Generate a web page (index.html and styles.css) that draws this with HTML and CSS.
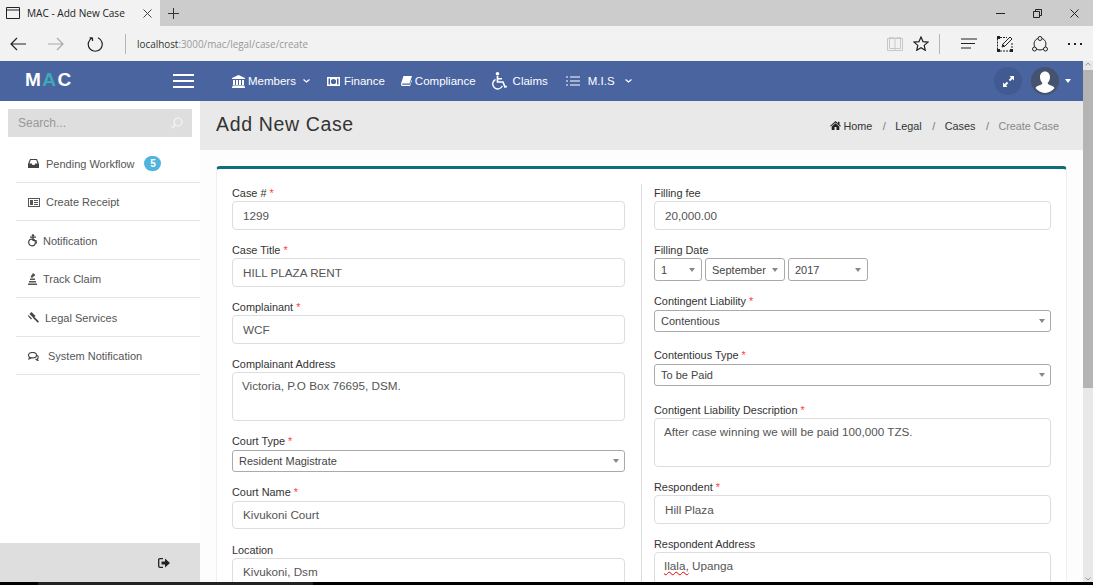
FILE: index.html
```html
<!DOCTYPE html>
<html>
<head>
    <title>MAC - Add New Case</title>
    <link rel="stylesheet" href="styles.css">
</head>
<body>
    <div class="tabstrip">
        <div class="tab">
            <svg class="tab-icon" width="14" height="12" viewBox="0 0 14 12"><path d="M.5.5h13v11H.5zM.5 3h13" fill="none" stroke="#222"/></svg>
            <span class="tab-title">MAC - Add New Case</span>
            <svg class="tab-close" width="9" height="9" viewBox="0 0 9 9"><path d="M.5.5l8 8M8.5.5l-8 8" stroke="#444"/></svg>
        </div>
        <svg class="tab-new" width="11" height="11" viewBox="0 0 11 11"><path d="M5.5 0v11M0 5.5h11" stroke="#333"/></svg>
        <div class="window-controls">
            <svg width="9" height="9" viewBox="0 0 9 9"><path d="M0 4.5h9" stroke="#222"/></svg>
            <svg width="9" height="9" viewBox="0 0 9 9"><path d="M.5 2.5h6v6h-6zM2.5 2.5v-2h6v6h-2" fill="none" stroke="#222"/></svg>
            <svg width="9" height="9" viewBox="0 0 9 9"><path d="M.5.5l8 8M8.5.5l-8 8" stroke="#222"/></svg>
        </div>
    </div>

    <div class="addressbar">
        <svg class="tool-back" width="16" height="14" viewBox="0 0 16 14"><path d="M16 7H1M7 1L1 7l6 6" fill="none" stroke="#222" stroke-width="1.2"/></svg>
        <svg class="tool-forward" width="16" height="14" viewBox="0 0 16 14"><path d="M0 7h15M9 1l6 6-6 6" fill="none" stroke="#aaa" stroke-width="1.2"/></svg>
        <svg class="tool-refresh" width="16" height="16" viewBox="0 0 16 16"><path d="M5.5 1.8A7 7 0 1 0 11 1.8M5.5 1.8V5M5.5 1.8H2.6" fill="none" stroke="#222" stroke-width="1.2"/></svg>
        <span class="tool-divider"></span>
        <span class="url"><b>localhost</b>:3000/mac/legal/case/create</span>
        <svg class="tool-read" width="16" height="14" viewBox="0 0 16 14"><path d="M.5 1.500h15v12H.5zM8 1.500v12M2.500 1.500V.5C5 .5 7 .5 8 1.500c1-1 3-1 5.500-1v1M2.500 1.500v10H8M13.500 1.500v10H8" fill="none" stroke="#c8c8c8"/></svg>
        <svg class="tool-star" width="16" height="15" viewBox="0 0 16 15"><path d="M8 1l2 4.600 5 .5-3.800 3.300 1.100 4.900L8 11.800l-4.300 2.500 1.100-4.900L1 6.100l5-.5z" fill="none" stroke="#222" stroke-width="1.200"/></svg>
        <span class="tool-divider tool-divider-right"></span>
        <svg class="tool-hub" width="17" height="11" viewBox="0 0 17 11"><path d="M0 1h16M0 5.500h14M0 10h10" stroke="#222" stroke-width="1.100"/></svg>
        <svg class="tool-note" width="16" height="16" viewBox="0 0 16 16"><path d="M.5 2.500v11M15 7v6.500M3 15h10M3 1.500h7" fill="none" stroke="#222" stroke-dasharray="2 1"/><path d="M0 0h3v3H0zM0 13h3v3H0zM13 13h3v3h-3z" fill="#222"/><path d="M5 11l1-3 7-7 2 2-7 7zM5.500 8.500l2 2" fill="none" stroke="#222"/></svg>
        <svg class="tool-share" width="16" height="16" viewBox="0 0 16 16"><g fill="none" stroke="#222"><circle cx="8" cy="8" r="6"/><circle cx="8" cy="2.500" r="2" fill="#f2f2f2"/><circle cx="2.500" cy="13" r="2" fill="#f2f2f2"/><circle cx="13.500" cy="13" r="2" fill="#f2f2f2"/></g></svg>
        <span class="tool-more">
            <i></i><i></i><i></i>
        </span>
    </div>

    <div class="page">
        <div class="viewport">
            <nav class="topnav">
                <div class="logo">M<span class="logo-a">A</span>C</div>
                <div class="hamburger"><i></i><i></i><i></i></div>
                <ul class="menu">
                    <li class="menu-members">
                        <svg width="13" height="13" viewBox="0 0 13 13" fill="#fff"><path d="M6.500 0L13 3v1H0V3zM1 5h2v5H1zM4 5h2v5H4zM7 5h2v5H7zM10 5h2v5h-2zM.5 10.500h12V12H.5zM0 12h13v1H0z"/></svg>
                        Members
                        <svg class="chev" width="7" height="4" viewBox="0 0 7 4"><path d="M.5.500l3 2.500 3-2.500" fill="none" stroke="#fff" stroke-width="1.200"/></svg>
                    </li>
                    <li class="menu-finance">
                        <svg width="13" height="9" viewBox="0 0 13 9"><path d="M0 0h13v9H0z" fill="#fff"/><circle cx="6.500" cy="4.500" r="2.600" fill="#4a64a0"/><path d="M1.500 1.500h1.500v6H1.500zM10 1.500h1.500v6H10z" fill="#4a64a0"/></svg>
                        Finance
                    </li>
                    <li class="menu-compliance">
                        <svg width="11" height="10" viewBox="0 0 11 10"><path d="M2.500 0H11L8.500 7.500H1.500C1 7.500 1 8.800 1.500 8.800H9L10.500 4 11 4.500 9 10H1.500C.2 10-.3 8.500.2 7z" fill="#fff"/></svg>
                        Compliance
                    </li>
                    <li class="menu-claims">
                        <svg width="15" height="18" viewBox="0 0 15 18"><circle cx="5.500" cy="1.800" r="1.800" fill="#fff"/><path d="M5.500 4v6h5.500l2 5 1.800-.7" fill="none" stroke="#fff" stroke-width="1.700"/><path d="M5.500 6.800h4.500M3.500 7.500a5 5 0 1 0 6.800 6.500" fill="none" stroke="#fff" stroke-width="1.400"/></svg>
                        Claims
                    </li>
                    <li class="menu-mis">
                        <svg width="14" height="10" viewBox="0 0 14 10"><path d="M0 1h2M0 5h2M0 9h2M4 1h10M4 5h10M4 9h10" stroke="#fff" stroke-width="1.200"/></svg>
                        M.I.S
                        <svg class="chev" width="7" height="4" viewBox="0 0 7 4"><path d="M.5.500l3 2.500 3-2.500" fill="none" stroke="#fff" stroke-width="1.200"/></svg>
                    </li>
                </ul>
                <div class="nav-right">
                    <span class="expand">
                        <svg width="11" height="11" viewBox="0 0 10 10"><path d="M6 0h4v4L8.500 2.800 6.500 4.800 5.200 3.500l2-2zM4 10H0V6l1.500 1.200 2-2L4.800 6.500l-2 2z" fill="#fff"/></svg>
                    </span>
                    <span class="avatar">
                        <svg width="28" height="28" viewBox="0 0 28 28"><path d="M14 4.500c3 0 5 2.400 5 5.600 0 2.500-1 4.700-2.400 6 .3 1.300 1.400 1.800 3.500 2.500 1.700.6 2.900 1.300 3.400 2.400A13 13 0 0 1 14 26a13 13 0 0 1-9.500-5c.5-1.100 1.700-1.800 3.400-2.400 2.100-.7 3.200-1.200 3.500-2.500-1.400-1.300-2.400-3.500-2.400-6 0-3.200 2-5.600 5-5.600z" fill="#fff"/></svg>
                    </span>
                    <span class="caret"></span>
                </div>
            </nav>

            <div class="layout">
                <aside class="sidebar">
                    <div class="search">
                        <span>Search...</span>
                        <svg width="12" height="12" viewBox="0 0 12 12"><circle cx="7" cy="5" r="4" fill="none" stroke="#f5f5f5" stroke-width="1.200"/><path d="M4 8l-3 3" stroke="#f5f5f5" stroke-width="1.400"/></svg>
                    </div>
                    <ul class="side-menu">
                        <li>
                            <svg class="side-icon" width="11" height="9" viewBox="0 0 11 9"><path d="M2 0h7l2 5v4H0V5zM2.800 1L1.500 4.500h2.300l.7 1.500h2l.7-1.500h2.300L8.200 1z" fill="#444" fill-rule="evenodd"/></svg>
                            <span class="side-text">Pending Workflow</span>
                            <span class="badge">5</span>
                        </li>
                        <li>
                            <svg class="side-icon icon-receipt" width="12" height="9" viewBox="0 0 12 9"><path d="M0 0h12v9H0zM1 1v7h10V1zM2 2h3v5H2zM6 2h4v1H6zM6 4h4v1H6zM6 6h4v1H6z" fill="#555" fill-rule="evenodd"/></svg>
                            <span class="side-text">Create Receipt</span>
                        </li>
                        <li>
                            <svg class="side-icon icon-narrow" width="9" height="13" viewBox="0 0 9 13"><circle cx="5" cy="1.500" r="1.300" fill="#444"/><path d="M2 3.200h6M5 3v3.500h3l.5 3" fill="none" stroke="#444" stroke-width="1.200"/><circle cx="4" cy="8.500" r="3.300" fill="none" stroke="#444" stroke-width="1.200"/></svg>
                            <span class="side-text">Notification</span>
                        </li>
                        <li>
                            <svg class="side-icon icon-narrow" width="9" height="12" viewBox="0 0 9 12"><path d="M0 10.500h9V12H0zM1 8h7v1.500H1zM2 5.500h5v1.500H2zM5 0L7.500 2 4 5 2.500 3.800z" fill="#555"/></svg>
                            <span class="side-text">Track Claim</span>
                        </li>
                        <li>
                            <svg class="side-icon icon-narrow" width="11" height="11" viewBox="0 0 11 11"><path d="M3.500 0L7.500 4 5.500 6 1.500 2zM6 4.500l5 5-1.200 1.300-5-5zM.5 3l3.500 3.500-1 1L0 4z" fill="#444"/></svg>
                            <span class="side-text">Legal Services</span>
                        </li>
                        <li>
                            <svg class="side-icon icon-system" width="11" height="9" viewBox="0 0 11 9"><ellipse cx="4.500" cy="3.200" rx="4" ry="2.700" fill="none" stroke="#444" stroke-width="1.100"/><path d="M1.500 5L1 7l2.500-1.200M8.500 3c2 .7 2.300 3 .7 4l.8 1.500-2.500-1.200" fill="none" stroke="#444" stroke-width="1.100"/></svg>
                            <span class="side-text">System Notification</span>
                        </li>
                    </ul>
                    <div class="side-footer">
                        <svg width="12" height="10" viewBox="0 0 12 10"><path d="M5 .7H2C1 .7.700 1.200.700 2v6c0 .8.300 1.300 1.300 1.300h3" fill="none" stroke="#222" stroke-width="1.300"/><path d="M3.500 3.500H7V.5L12 5 7 9.500v-3H3.500z" fill="#222"/></svg>
                    </div>
                </aside>

                <main class="content">
                    <header class="content-header">
                        <h1>Add New Case</h1>
                        <ol class="breadcrumb">
                            <li>
                                <svg width="11" height="9" viewBox="0 0 11 9"><path d="M5.500 0L8 2.200V.7h1.500v2.800L11 5l-.7.600-4.800-4.200L.7 5.600 0 5zM5.500 2.200l3.800 3.300V9H6.500V6h-2v3H1.700V5.500z" fill="#222"/></svg>
                                Home
                            </li>
                            <li>Legal</li>
                            <li>Cases</li>
                            <li class="current">Create Case</li>
                        </ol>
                    </header>

                    <section class="content-body">
                        <form class="card">
                            <div class="col col-left">
                                <div class="field">
                                    <label>Case # <em>*</em></label>
                                    <input class="input" type="text" value="1299">
                                </div>
                                <div class="field">
                                    <label>Case Title <em>*</em></label>
                                    <input class="input" type="text" value="HILL PLAZA RENT">
                                </div>
                                <div class="field">
                                    <label>Complainant <em>*</em></label>
                                    <input class="input" type="text" value="WCF">
                                </div>
                                <div class="field">
                                    <label>Complainant Address</label>
                                    <textarea class="input area">Victoria, P.O Box 76695, DSM.</textarea>
                                </div>
                                <div class="field field-court">
                                    <label class="label-up">Court Type <em>*</em></label>
                                    <select class="select"><option>Resident Magistrate</option></select>
                                </div>
                                <div class="field">
                                    <label class="label-up">Court Name <em>*</em></label>
                                    <input class="input" type="text" value="Kivukoni Court">
                                </div>
                                <div class="field">
                                    <label>Location</label>
                                    <input class="input" type="text" value="Kivukoni, Dsm">
                                </div>
                            </div>
                            <div class="col col-right">
                                <div class="field">
                                    <label>Filling fee</label>
                                    <input class="input" type="text" value="20,000.00">
                                </div>
                                <div class="field">
                                    <label>Filling Date</label>
                                    <div class="date-row">
                                        <select class="select date-day"><option>1</option></select>
                                        <select class="select date-month"><option>September</option></select>
                                        <select class="select date-year"><option>2017</option></select>
                                    </div>
                                </div>
                                <div class="field field-wide">
                                    <label class="label-up">Contingent Liability <em>*</em></label>
                                    <select class="select"><option>Contentious</option></select>
                                </div>
                                <div class="field field-wide">
                                    <label class="label-up">Contentious Type <em>*</em></label>
                                    <select class="select"><option>To be Paid</option></select>
                                </div>
                                <div class="field">
                                    <label>Contigent Liability Description <em>*</em></label>
                                    <textarea class="input area">After case winning we will be paid 100,000 TZS.</textarea>
                                </div>
                                <div class="field">
                                    <label>Respondent <em>*</em></label>
                                    <input class="input" type="text" value="Hill Plaza">
                                </div>
                                <div class="field">
                                    <label>Respondent Address</label>
                                    <div class="input area"><span class="misspelt">Ilala,</span> Upanga</div>
                                </div>
                            </div>
                        </form>
                    </section>
                </main>
            </div>
        </div>
        <div class="scrollbar">
            <svg width="10" height="7" viewBox="0 0 10 7"><path d="M2.500 4.500L5 2l2.500 2.500" fill="none" stroke="#999"/></svg>
            <div class="scroll-thumb"></div>
            <svg class="scroll-down" width="10" height="7" viewBox="0 0 10 7"><path d="M2.500 2.500L5 5l2.500-2.500" fill="none" stroke="#999"/></svg>
        </div>
    </div>
    <div class="taskbar"><div class="taskbar-app"></div></div>
</body>
</html>
```

FILE: styles.css
```css
html, body {
    height: 100%;
}

body {
    margin: 0;
    height: 585px;
    overflow: hidden;
    display: flex;
    flex-direction: column;
    font-family: "Liberation Sans", Arial, sans-serif;
    font-size: 12px;
    color: #333;
    background: #fff;
}

ul, ol {
    list-style: none;
    margin: 0;
    padding: 0;
}

/* browser chrome */
.tabstrip {
    height: 26px;
    flex: none;
    display: flex;
    align-items: center;
    background: #cccccc;
}

.tab {
    width: 160px;
    height: 26px;
    display: flex;
    align-items: center;
    background: #f2f2f2;
}

.tab-icon {
    margin-left: 6px;
}

.tab-title {
    margin-left: 7px;
    width: 116px;
    font-family: "Open Sans", sans-serif;
    font-size: 10.1px;
    color: #222;
    white-space: nowrap;
}

.tab-new {
    margin-left: 8px;
}

.window-controls {
    margin-left: auto;
    display: flex;
    gap: 28px;
    padding-right: 14px;
}

.addressbar {
    height: 35px;
    flex: none;
    display: flex;
    align-items: center;
    background: #f2f2f2;
}

.tool-back {
    margin-left: 10px;
}

.tool-forward {
    margin-left: 22px;
}

.tool-refresh {
    margin-left: 23px;
}

.tool-divider {
    width: 1px;
    height: 20px;
    margin-left: 22px;
    background: #b5b5b5;
}

.url {
    margin-left: 11px;
    width: 750px;
    font-family: "Open Sans", sans-serif;
    font-size: 9.9px;
    color: #999;
}

.url b {
    font-weight: normal;
    color: #333;
}

.tool-star {
    margin-left: 10px;
}

.tool-divider-right {
    margin-left: 10px;
}

.tool-hub {
    margin-left: 21px;
}

.tool-note {
    margin-left: 19px;
}

.tool-share {
    margin-left: 19px;
}

.tool-more {
    margin-left: 20px;
    display: flex;
    gap: 4px;
}

.tool-more i {
    width: 2px;
    height: 2px;
    background: #222;
}

/* page */
.page {
    flex: 1;
    min-height: 0;
    display: flex;
}

.viewport {
    flex: 1;
    min-width: 0;
    display: flex;
    flex-direction: column;
}

.scrollbar {
    width: 10px;
    flex: none;
    display: flex;
    flex-direction: column;
    background: #e8e8e8;
}

.scrollbar svg {
    flex: none;
}

.scroll-thumb {
    height: 318px;
    margin-top: 2px;
    background: #b4b4b4;
}

.scroll-down {
    margin-top: auto;
}

.taskbar {
    height: 3px;
    flex: none;
    background: #000;
}

.taskbar-app {
    width: 275px;
    height: 3px;
    margin-left: 38px;
    background: #222;
}

/* top nav */
.topnav {
    height: 40px;
    flex: none;
    display: flex;
    align-items: center;
    background: #4a64a0;
    color: #fff;
}

.logo {
    width: 173px;
    padding-left: 25px;
    box-sizing: border-box;
    font-size: 19px;
    font-weight: bold;
    letter-spacing: 1.5px;
    color: #fff;
    margin-top: -3px;
}

.logo-a {
    color: #3fa9b5;
}

.hamburger {
    width: 21px;
    display: flex;
    flex-direction: column;
    gap: 4px;
}

.hamburger i {
    height: 2px;
    background: #fff;
}

.menu {
    display: flex;
    align-items: center;
    margin-left: 38px;
    font-size: 11.5px;
}

.menu li {
    display: flex;
    align-items: center;
    white-space: nowrap;
}

.menu li svg {
    margin-right: 4px;
}

.menu li .chev {
    margin: 0 0 0 7px;
}

.menu .menu-members svg:first-child,
.menu .menu-compliance svg {
    margin-right: 3px;
}

.menu-finance {
    margin-left: 17px;
}

.menu-compliance {
    margin-left: 16px;
}

.menu-claims {
    margin-left: 16px;
}

.menu .menu-claims svg {
    margin-right: 6px;
}

.menu-mis {
    margin-left: 18px;
}

.menu .menu-mis svg:first-child {
    margin-right: 8px;
}

.menu .menu-mis .chev {
    margin-left: 10px;
}

.nav-right {
    margin-left: auto;
    display: flex;
    align-items: center;
    padding-right: 12px;
}

.expand, .avatar {
    width: 28px;
    height: 28px;
    border-radius: 50%;
    display: flex;
    align-items: center;
    justify-content: center;
}

.expand {
    background: #425a92;
}

.avatar {
    margin-left: 9px;
    overflow: hidden;
    background: #45536f;
}

.caret {
    margin-left: 6px;
    border-top: 4px solid #fff;
    border-left: 3px solid transparent;
    border-right: 3px solid transparent;
}

/* layout */
.layout {
    flex: 1;
    min-height: 0;
    display: flex;
}

.sidebar {
    width: 200px;
    flex: none;
    display: flex;
    flex-direction: column;
    background: #fff;
}

.search {
    height: 28px;
    margin: 8px 8px 0;
    padding: 0 9px 0 10px;
    display: flex;
    align-items: center;
    justify-content: space-between;
    background: #dedede;
    color: #999;
}

.side-menu {
    margin: 7.400px 0 0 16px;
    font-size: 11px;
    color: #555;
}

.side-menu li {
    height: 38.500px;
    box-sizing: border-box;
    display: flex;
    align-items: center;
    padding: 1px 0 0 12px;
    border-bottom: 1px solid #e4e4e8;
}

.side-icon {
    flex: none;
    margin-right: 7px;
}

.icon-receipt, .icon-narrow {
    margin-right: 6px;
}

.icon-system {
    margin-right: 9px;
}

.badge {
    margin-left: 10px;
    width: 17px;
    height: 15px;
    border-radius: 8px;
    background: #4fb5dc;
    color: #fff;
    font-size: 10px;
    font-weight: bold;
    line-height: 15px;
    text-align: center;
}

.side-footer {
    margin-top: auto;
    height: 39px;
    display: flex;
    align-items: center;
    justify-content: flex-end;
    padding-right: 30px;
    box-sizing: border-box;
    background: #dedede;
}

/* content */
.content {
    flex: 1;
    min-width: 0;
    display: flex;
    flex-direction: column;
    overflow: hidden;
    background: #fdfdfd;
}

.content-header {
    height: 49px;
    flex: none;
    display: flex;
    align-items: center;
    justify-content: space-between;
    padding: 0 24px 0 16px;
    background: #e9e9e9;
}

.content-header h1 {
    margin: 0 0 2px;
    font-size: 19.500px;
    font-weight: normal;
    letter-spacing: .65px;
    color: #333;
}

.breadcrumb {
    display: flex;
    align-items: center;
    font-size: 10.800px;
    color: #333;
}

.breadcrumb li {
    display: flex;
    align-items: center;
    gap: 3px;
}

.breadcrumb li + li::before {
    content: "/";
    margin: 0 6.500px 0 10.500px;
    color: #777;
}

.breadcrumb .current {
    color: #888;
}

.content-body {
    padding: 16px 16px 0;
}

.card {
    display: flex;
    height: 500px;
    padding: 15px 15px 0;
    border: 1px solid #efefef;
    border-top: 3px solid #0f6e7a;
    border-radius: 4px 4px 0 0;
    background: #fff;
    box-sizing: border-box;
}

.col-left {
    width: 393px;
    flex: none;
    padding-right: 16px;
    border-right: 1px solid #ddd;
}

.col-right {
    flex: 1;
    min-width: 0;
    padding-left: 12px;
}

.field {
    margin-bottom: 11.500px;
}

.field-court {
    margin-bottom: 12px;
}

.field-wide {
    margin-bottom: 15px;
}

.field label {
    display: block;
    height: 17px;
    line-height: 19px;
    font-size: 10.900px;
    color: #333;
}

.field .label-up {
    line-height: 17px;
}

.field em {
    font-style: normal;
    color: #f44;
}

.input {
    display: block;
    width: 100%;
    height: 28.500px;
    box-sizing: border-box;
    padding: 0 10px;
    border: 1px solid #ddd;
    border-radius: 4px;
    background: #fff;
    font-family: "Liberation Sans", Arial, sans-serif;
    font-size: 11.700px;
    color: #555;
}

.area {
    height: 49px;
    padding: 5px 9px;
    resize: none;
    line-height: 16px;
}

.select {
    display: block;
    width: 100%;
    height: 22px;
    box-sizing: border-box;
    padding: 0 6px;
    border: 1px solid #aaa;
    border-radius: 3px;
    appearance: none;
    background-color: #fff;
    background-image: url("data:image/svg+xml,%3Csvg xmlns='http://www.w3.org/2000/svg' width='6' height='4'%3E%3Cpath d='M0 0h6L3 4z' fill='%23888'/%3E%3C/svg%3E");
    background-position: right 5px center;
    background-repeat: no-repeat;
    font-family: "Liberation Sans", Arial, sans-serif;
    font-size: 11px;
    color: #444;
}

.date-row {
    display: flex;
    gap: 3px;
}

.date-row .select {
    height: 23px;
    background-position: right 6px center;
}

.date-day {
    width: 48px;
}

.date-month {
    width: 80px;
}

.date-year {
    width: 80px;
}

.misspelt {
    text-decoration: underline wavy #e00;
    text-decoration-thickness: 1px;
}
```
